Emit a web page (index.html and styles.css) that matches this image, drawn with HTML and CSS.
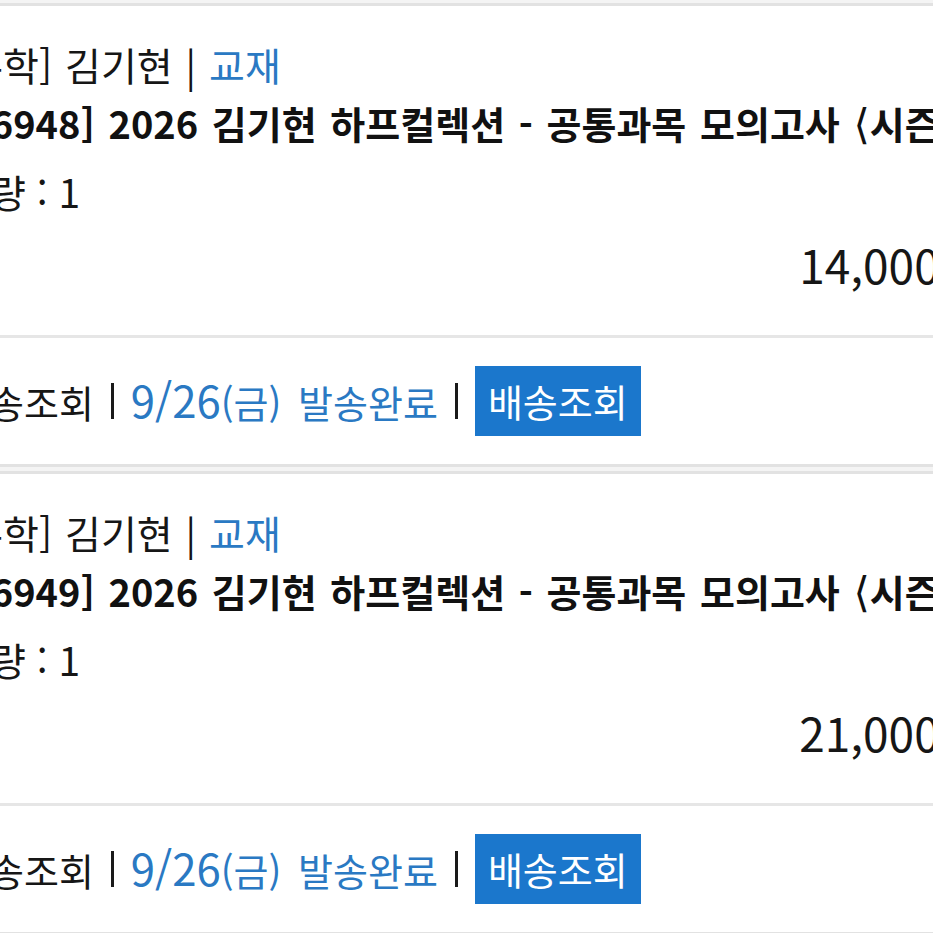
FILE: index.html
```html
<!DOCTYPE html>
<html lang="ko">
<head>
<meta charset="utf-8">
<title>주문내역</title>
<link rel="stylesheet" href="styles.css">
</head>
<body>
<div class="orders">
  <section class="card">
    <div class="info">
      <div class="meta">[수학] 김기현 | <span class="blue">교재</span></div>
      <div class="title">[16948] 2026 김기현 하프컬렉션 - 공통과목 모의고사 <span class="ang">⟨</span>시즌2<span class="ang">⟩</span> 1회</div>
      <div class="qty">수량 : 1</div>
      <div class="price">14,000원</div>
    </div>
    <div class="actions">
      <span class="label">배송조회</span>
      <span class="sep"></span>
      <span class="blue"><span class="num">9/26</span>(금) 발송완료</span>
      <span class="sep"></span>
      <span class="btn">배송조회</span>
    </div>
  </section>
  <section class="card">
    <div class="info">
      <div class="meta">[수학] 김기현 | <span class="blue">교재</span></div>
      <div class="title">[16949] 2026 김기현 하프컬렉션 - 공통과목 모의고사 <span class="ang">⟨</span>시즌2<span class="ang">⟩</span> 2회</div>
      <div class="qty">수량 : 1</div>
      <div class="price">21,000원</div>
    </div>
    <div class="actions">
      <span class="label">배송조회</span>
      <span class="sep"></span>
      <span class="blue"><span class="num">9/26</span>(금) 발송완료</span>
      <span class="sep"></span>
      <span class="btn">배송조회</span>
    </div>
  </section>
</div>
</body>
</html>
```
FILE: styles.css
```css
html, body {
  margin: 0;
  padding: 0;
}
body {
  background: #f4f4f4;
  overflow: hidden;
  font-family: "Noto Sans CJK KR", "DejaVu Sans", sans-serif;
  color: #161616;
  width: 933px;
  height: 933px;
}
.orders {
  margin: 0 -67px 0 -46px;
  padding-top: 3px;
  display: flex;
  flex-direction: column;
  gap: 4px;
}
.card {
  background: #fff;
  border-top: 3px solid #e2e2e2;
  border-bottom: 3px solid #e2e2e2;
}
.info {
  padding: 34px 18px 43px 0;
  white-space: nowrap;
}
.meta, .title, .qty {
  font-size: 39px;
  line-height: 48px;
  height: 48px;
}
.meta {
  word-spacing: 2px;
}
.title {
  font-size: 38px;
  font-weight: 700;
  margin-top: 11px;
  color: #111;
  word-spacing: 3px;
}
.ang {
  font-family: "DejaVu Sans", sans-serif;
  font-weight: 400;
  font-size: 1.1em;
  line-height: 1;
}
.qty {
  margin-top: 20px;
}
.price {
  margin-top: 21px;
  font-size: 46px;
  line-height: 56px;
  height: 56px;
  text-align: right;
}
.blue {
  color: #2a79c3;
}
.actions {
  border-top: 3px solid #e6e6e6;
  height: 126px;
  display: flex;
  align-items: center;
  gap: 17px;
  font-size: 38px;
  white-space: nowrap;
  word-spacing: 6px;
}
.actions .num {
  font-size: 1.15em;
  line-height: 1;
}
.sep {
  width: 3px;
  height: 36px;
  background: #1a1a1a;
}
.btn {
  background: #1b77cc;
  color: #fff;
  height: 70px;
  line-height: 70px;
  padding: 0 13px;
  word-spacing: 0;
}
```
